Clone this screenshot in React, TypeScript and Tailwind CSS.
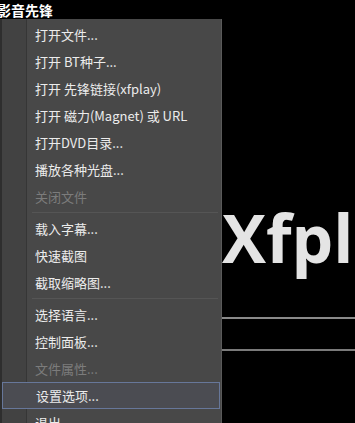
const items: (string | { label: string; disabled?: boolean; active?: boolean } | null)[] = [
  '打开文件...',
  '打开 BT种子...',
  '打开 先锋链接(xfplay)',
  '打开 磁力(Magnet) 或 URL',
  '打开DVD目录...',
  '播放各种光盘...',
  { label: '关闭文件', disabled: true },
  null,
  '载入字幕...',
  '快速截图',
  '截取缩略图...',
  null,
  '选择语言...',
  '控制面板...',
  { label: '文件属性...', disabled: true },
  { label: '设置选项...', active: true },
  '退出',
];

export default function App() {
  return (
    <div
      className="w-[355px] h-[423px] overflow-hidden bg-black"
      style={{ fontFamily: '"Noto Sans CJK SC", "Liberation Sans", sans-serif' }}
    >
      <div className="h-[19px] flex items-center -ml-[3px] text-[14px] font-bold text-white leading-none">
        影音先锋
      </div>
      <div className="flex">
        {/* popup menu */}
        <div className="w-[222px] shrink-0 h-[404px] flex bg-[#484848] border-l-2 border-[#2e2e2e] border-r border-r-[#5a5a5a]">
          <div className="w-[25px] shrink-0 bg-[#424242] border-r border-[#363636]" />
          <div className="flex-1 pt-[2px]">
            {items.map((it, i) => {
              if (it === null) {
                return (
                  <div key={i} className="h-[5px] flex items-center pl-[5px] pr-[3px]">
                    <div className="h-px w-full bg-[#363636] border-b border-[#555]" />
                  </div>
                );
              }
              const entry = typeof it === 'string' ? { label: it } : it;
              return (
                <div
                  key={i}
                  className={`h-[27px] flex items-center text-[13px] leading-none whitespace-nowrap ${
                    entry.active
                      ? '-ml-[25px] pl-[33px] mr-[1px] bg-[#4b4c52] border border-[#67779a]'
                      : 'pl-[8px]'
                  } ${entry.disabled ? 'text-[#7c7c7c]' : 'text-[#ececec]'}`}
                >
                  {entry.label}
                </div>
              );
            })}
          </div>
        </div>
        {/* player background */}
        <div className="flex-1 overflow-hidden">
          <div
            className="mt-[185px] text-[66px] font-bold leading-none text-[#e4e4e4] whitespace-nowrap"
            style={{ fontFamily: '"Open Sans", "Liberation Sans", sans-serif' }}
          >
            Xfplay
          </div>
          <div className="mt-[47px] h-[2px] bg-[#8a8a8a]" />
          <div className="mt-[30px] h-[2px] bg-[#7a7a7a]" />
        </div>
      </div>
    </div>
  );
}
